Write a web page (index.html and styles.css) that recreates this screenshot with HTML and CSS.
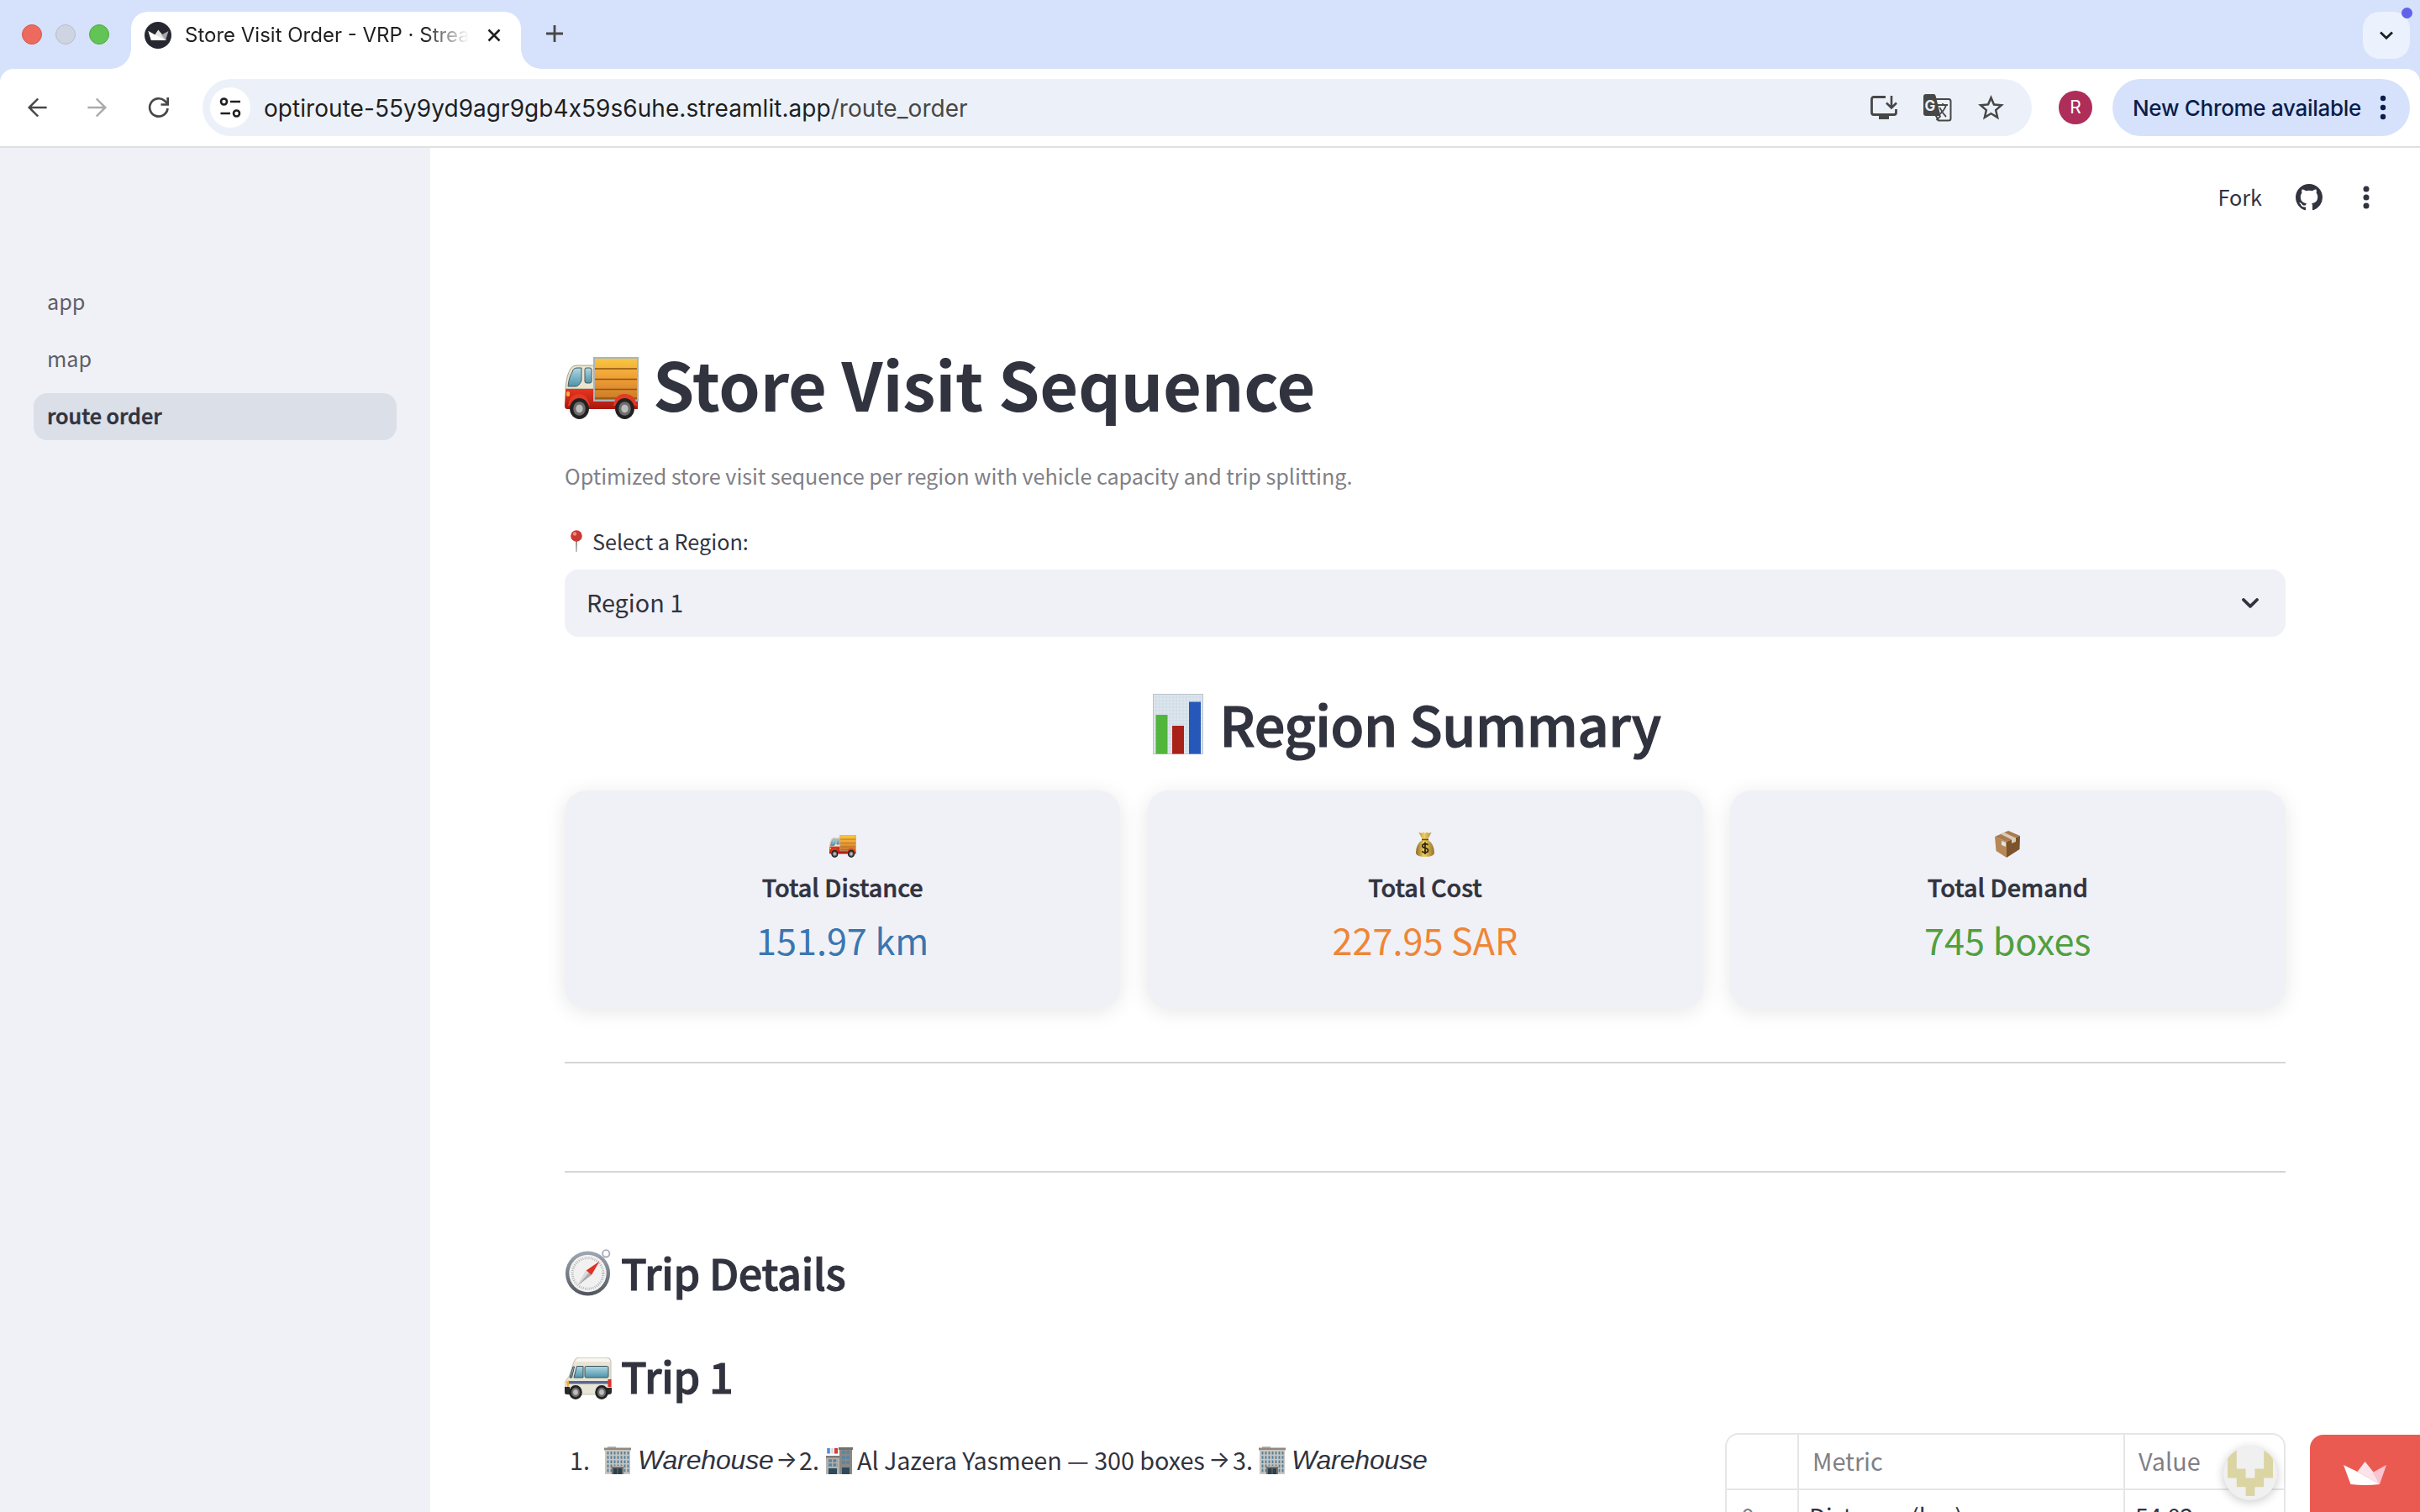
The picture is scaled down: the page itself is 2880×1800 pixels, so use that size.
FILE: index.html
```
<!DOCTYPE html>
<html lang="en">
<head>
<meta charset="utf-8">
<title>Store Visit Order - VRP · Streamlit</title>
<link rel="stylesheet" href="styles.css">
</head>
<body>
<svg class="defs" aria-hidden="true">
  <defs>
    <linearGradient id="cargo" x1="0" y1="0" x2="0" y2="1"><stop offset="0" stop-color="#f8c840"/><stop offset=".45" stop-color="#f0a038"/><stop offset="1" stop-color="#c87824"/></linearGradient>
    <linearGradient id="glass" x1="0" y1="0" x2="0" y2="1"><stop offset="0" stop-color="#b0d8e4"/><stop offset="1" stop-color="#4d93a9"/></linearGradient>
    <linearGradient id="red" x1="0" y1="0" x2="0" y2="1"><stop offset="0" stop-color="#e8351f"/><stop offset="1" stop-color="#a8170f"/></linearGradient>
    <linearGradient id="rim" x1="0" y1="0" x2="0" y2="1"><stop offset="0" stop-color="#9fa8b3"/><stop offset="1" stop-color="#50555b"/></linearGradient>
    <linearGradient id="gold" x1="0" y1="0" x2="1" y2="0"><stop offset="0" stop-color="#8d6b22"/><stop offset=".45" stop-color="#efd062"/><stop offset="1" stop-color="#96722a"/></linearGradient>
    <symbol id="wheel" viewBox="0 0 22 24"><ellipse cx="11" cy="12" rx="11" ry="12" fill="#222"/><ellipse cx="11" cy="12" rx="7" ry="8" fill="#6e6e6e"/><ellipse cx="11" cy="12" rx="4" ry="4.6" fill="#bdbdbd"/></symbol>
    <symbol id="truck" viewBox="0 0 88 74">
      <path d="M14 10H36V38H1Q2 22 7 14Q9 10 14 10Z" fill="#ebe4cf" stroke="#a8a394" stroke-width="1"/>
      <path d="M1 38H36V52H87V62H3Q0 62 0 58Z" fill="url(#red)"/>
      <path d="M9 18Q10 13 15 13H20V28Q17 35 13 35H4Q5 24 9 18Z" fill="url(#glass)" stroke="#4a5a60" stroke-width="1"/>
      <rect x="24" y="13" width="8" height="18" rx="2" fill="url(#glass)" stroke="#4a5a60" stroke-width="1"/>
      <rect x="35" y="1" width="52" height="51" fill="url(#cargo)" stroke="#aab5b8" stroke-width="2"/>
      <path d="M36 14H86M36 26.500H86M36 38.500H86M36 49H86" stroke="#8f5312" stroke-width="1.500"/>
      <path d="M4 58Q6 44 17 44Q27 44 30 58ZM58 58Q60 44 71 44Q84 44 86 58Z" fill="#e23a25"/>
      <rect x="2" y="41" width="4" height="6" rx="2" fill="#f6b445"/>
      <use href="#wheel" x="6" y="49" width="23" height="25"/><use href="#wheel" x="60" y="49" width="23" height="25"/>
    </symbol>
    <symbol id="office" viewBox="0 0 32 33">
      <rect x="4" y="0" width="10" height="3" fill="#bdb8b4"/><rect x="0" y="1.500" width="32" height="3" fill="#8f8883"/>
      <rect x="1" y="4" width="30" height="29" fill="#cbc5be"/>
      <path d="M4.500 6V31M8.500 6V31M12.500 6V23M16.500 6V23M20.500 6V23M24.500 6V31M28.500 6V31" stroke="#4f7f9e" stroke-width="1.900" stroke-dasharray="3.600 1.600"/>
      <rect x="9" y="24" width="14" height="9" fill="#77706b"/><rect x="11" y="26" width="10" height="7" fill="#26414f"/><path d="M16 26V33" stroke="#77706b"/>
    </symbol>
  </defs>
</svg>

<div class="browser">
  <div class="tabstrip">
    <div class="lights"><i class="light red"></i><i class="light grey"></i><i class="light green"></i></div>
    <div class="tab">
      <svg class="favicon" viewBox="0 0 32 32"><circle cx="16" cy="16" r="16" fill="#262730"/><path d="M4.500 11L12 16L26 22H8Z" fill="#fff"/><path d="M12 16L16.300 9.500L21 15L26 22H8Z" fill="#e4e4e6"/><path d="M28.500 11L20 15.500L25 22Z" fill="#a5a5aa"/><path d="M4.500 11L25 22H8Z" fill="#fff"/></svg>
      <span class="tab-title">Store Visit Order - VRP · Strea</span>
      <svg class="close" viewBox="0 0 16 16"><path d="M1.500 1.500L14.500 14.500M14.500 1.500L1.500 14.500" stroke="#1f1f1f" stroke-width="2.600"/></svg>
    </div>
    <svg class="plus" viewBox="0 0 20 20"><path d="M10 0V20M0 10H20" stroke="#474747" stroke-width="2.800"/></svg>
    <div class="tab-search"><svg viewBox="0 0 16 10"><path d="M1 1.500L8 8.300L15 1.500" fill="none" stroke="#1f1f1f" stroke-width="2.800"/></svg><i class="notice"></i></div>
  </div>
  <div class="toolbar">
    <svg class="nav back" viewBox="0 0 24 24"><path d="M20.200 11.100H7.600l5.900-5.900L12.200 4l-8 8 8 8 1.300-1.200-5.900-5.900H20.200Z" fill="#474747"/></svg>
    <svg class="nav forward" viewBox="0 0 24 24"><path d="M3.800 11.100H16.400l-5.900-5.900L11.800 4l8 8-8 8-1.300-1.200 5.900-5.900H3.800Z" fill="#ababab"/></svg>
    <svg class="reload" viewBox="0 0 26 26"><path d="M23.500 14A10.700 10.700 0 1 1 20 5L23 8" fill="none" stroke="#474747" stroke-width="2.700"/><path d="M23.700 1V9.500H15.500" fill="none" stroke="#474747" stroke-width="2.700"/></svg>
    <div class="omnibox">
      <div class="site"><svg viewBox="0 0 26 24"><g fill="none" stroke="#1f1f1f" stroke-width="2.600"><circle cx="5.500" cy="5" r="3.500"/><path d="M13 5H25M1.500 19H13"/><circle cx="20.500" cy="19" r="3.500"/></g></svg></div>
      <div class="url">optiroute-55y9yd9agr9gb4x59s6uhe.streamlit.app<span>/route_order</span></div>
      <svg class="install" viewBox="0 0 32 28"><path d="M18 1.500H4Q1.500 1.500 1.500 4V20Q1.500 22.500 4 22.500H28Q30.500 22.500 30.500 20V16" fill="none" stroke="#474747" stroke-width="2.800"/><path d="M10 23H22V28H10Z" fill="#474747"/><path d="M25 0V14M19 8.500L25 14.500L31 8.500" fill="none" stroke="#474747" stroke-width="2.600"/></svg>
      <svg class="translate" viewBox="0 0 34 34"><path d="M14 7H30Q32.500 7 32.500 9.500V30Q32.500 32.500 30 32.500H18L14.500 26" fill="none" stroke="#474747" stroke-width="2"/><path d="M3 1H12.500Q14 1 14.600 3L20.500 27H3Q0 27 0 24V4Q0 1 3 1Z" fill="#474747"/><path d="M17 14H29M23 12V14M27 14Q25 21 18 26M19.500 17Q22 23 27 28M15.500 32L20.500 27" fill="none" stroke="#474747" stroke-width="1.800"/><text class="translate-g" x="1.500" y="20.500">G</text></svg>
      <svg class="star" viewBox="0 0 24 24"><path d="M22 9.240l-7.190-.62L12 2 9.190 8.630 2 9.240l5.460 4.730L5.820 21 12 17.270 18.180 21l-1.630-7.030L22 9.240zM12 15.400l-3.760 2.270 1-4.280-3.320-2.880 4.380-.38L12 6.100l1.710 4.040 4.380.38-3.320 2.880 1 4.280L12 15.400z" fill="#474747"/></svg>
    </div>
    <div class="profile">R</div>
    <div class="update"><span>New Chrome available</span><svg viewBox="0 0 8 30"><g fill="#0a1d4d"><circle cx="4" cy="4" r="3.200"/><circle cx="4" cy="15" r="3.200"/><circle cx="4" cy="26" r="3.200"/></g></svg></div>
  </div>
</div>

<div class="app">
  <nav class="sidebar">
    <a class="page-link">app</a>
    <a class="page-link">map</a>
    <a class="page-link active">route order</a>
  </nav>
  <main class="main">
    <header class="app-header">
      <span class="fork">Fork</span>
      <svg class="github" viewBox="0 0 16 16"><path fill="#31333f" d="M8 0C3.580 0 0 3.580 0 8c0 3.540 2.290 6.530 5.470 7.590.4.070.55-.17.55-.38 0-.19-.01-.82-.01-1.490-2.010.37-2.530-.49-2.690-.94-.09-.23-.48-.94-.82-1.130-.28-.15-.68-.52-.01-.53.63-.01 1.080.58 1.230.82.72 1.210 1.870.87 2.330.66.070-.52.28-.87.51-1.070-1.780-.2-3.640-.89-3.640-3.950 0-.87.31-1.590.82-2.150-.08-.2-.36-1.020.08-2.120 0 0 .67-.21 2.200.82.64-.18 1.320-.27 2-.27.68 0 1.360.09 2 .27 1.530-1.040 2.200-.82 2.200-.82.44 1.100.16 1.920.08 2.120.51.56.82 1.270.82 2.150 0 3.070-1.870 3.750-3.650 3.950.29.25.54.73.54 1.480 0 1.070-.01 1.930-.01 2.200 0 .21.15.46.55.38A8.010 8.010 0 0 0 16 8c0-4.420-3.580-8-8-8z"/></svg>
      <svg class="kebab" viewBox="0 0 8 28"><g fill="#31333f"><circle cx="4" cy="4" r="3.500"/><circle cx="4" cy="14" r="3.500"/><circle cx="4" cy="24" r="3.500"/></g></svg>
    </header>
    <div class="content">
      <h1 class="title"><svg class="title-icon"><use href="#truck"/></svg><span>Store Visit Sequence</span></h1>
      <p class="caption">Optimized store visit sequence per region with vehicle capacity and trip splitting.</p>
      <div class="label"><svg class="pin" viewBox="0 0 14 26"><path d="M6 12H8L7.500 26H6.500Z" fill="#8f8a86"/><circle cx="7" cy="7" r="6.800" fill="#c93a34"/><circle cx="5" cy="4.500" r="2.200" fill="#ef8a80"/></svg><span>Select a Region:</span></div>
      <div class="select"><span>Region 1</span><svg viewBox="0 0 20 12"><path d="M2 2L10 9.800L18 2" fill="none" stroke="#31333f" stroke-width="3.800" stroke-linecap="round" stroke-linejoin="round"/></svg></div>

      <h2 class="summary-title">
        <svg viewBox="0 0 60 72"><rect width="60" height="72" fill="#dfe6ec"/><path d="M4 0V72M8 0V72M12 0V72M16 0V72M20 0V72M24 0V72M28 0V72M32 0V72M36 0V72M40 0V72M44 0V72M48 0V72M52 0V72M56 0V72M0 4H60M0 8H60M0 12H60M0 16H60M0 20H60M0 24H60M0 28H60M0 32H60M0 36H60M0 40H60M0 44H60M0 48H60M0 52H60M0 56H60M0 60H60M0 64H60M0 68H60" stroke="#c3d9e8" stroke-width=".6"/><rect x=".5" y=".5" width="59" height="71" fill="none" stroke="#bcc3ca"/><rect x="3.500" y="25" width="14" height="46.500" fill="#52b53c"/><rect x="23" y="38" width="14" height="33.500" fill="#a9221a"/><rect x="43" y="9.500" width="14" height="62" fill="#2558b8"/></svg>
        <span>Region Summary</span>
      </h2>
      <div class="cards">
        <div class="card"><svg class="card-icon truck"><use href="#truck"/></svg><div class="card-label">Total Distance</div><div class="card-value blue">151.97 km</div></div>
        <div class="card"><svg class="card-icon bag" viewBox="0 0 22 30"><path d="M3.500 1L7 2L9 .5L11 2L13.500 .5L15 2L18.500 1L14 9.500Q22 15 22 25Q22 30 11 30Q0 30 0 25Q0 15 8 9.500Z" fill="url(#gold)"/><path d="M7 9.500H15" stroke="#6b4c14" stroke-width="1.500"/><path d="M14.600 15.800Q11 13.600 8.200 15.800Q6.600 18.600 11 19.600Q15.800 20.800 14.200 23.800Q11 26.200 7.200 23.600M11 12.500V27" fill="none" stroke="#33280f" stroke-width="1.800"/></svg><div class="card-label">Total Cost</div><div class="card-value orange">227.95 SAR</div></div>
        <div class="card"><svg class="card-icon box" viewBox="0 0 30 32"><path d="M0 7L14 13L14 32L1.500 24Z" fill="#b88758"/><path d="M14 13L30 6L29.500 22L14 32Z" fill="#7b532c"/><path d="M0 7L16 0L30 6L14 13Z" fill="#a87b50"/><path d="M7 4L11 2L25 8.500V13L20 15V10.500Z" fill="#dccbb2"/><path d="M8 12L13 14V19L8 17Z" fill="#e2e3e4"/></svg><div class="card-label">Total Demand</div><div class="card-value green">745 boxes</div></div>
      </div>
      <hr class="rule">
      <hr class="rule second">

      <h3 class="section"><svg viewBox="0 0 56 58"><circle cx="50" cy="5.500" r="4.300" fill="none" stroke="#a9afb6" stroke-width="2"/><circle cx="27.500" cy="30" r="27.500" fill="url(#rim)"/><circle cx="27.500" cy="30" r="23" fill="#f1f1f1"/><circle cx="27.500" cy="30" r="19" fill="none" stroke="#a9a9a9" stroke-width="3" stroke-dasharray=".8 1.700"/><path d="M42 15L32 32L25.500 26.500Z" fill="#dd3229"/><path d="M15 45L32 32L25.500 26.500Z" fill="#a9a9a9"/><path d="M15 45L28.700 29.200L25.500 26.500Z" fill="#dcdcdc"/></svg><span>Trip Details</span></h3>
      <h3 class="section trip"><svg viewBox="0 0 56 50"><path d="M17 0H50Q54 0 55 4V40Q55 44 52 44H4Q0 44 0 40V30Q2 26 5 23L11 5Q13 0 17 0Z" fill="#e9e5d6" stroke="#b7b3a5" stroke-width=".8"/><path d="M15 1H50Q53 1 54 5H12.500Z" fill="#f8f6ee"/><path d="M6 24L10 11H11.500L8.500 24ZM11 24L14.500 10.500H22V24Z" fill="url(#glass)" stroke="#3f5258"/><rect x="24" y="10.500" width="28" height="13.500" rx="1.500" fill="url(#glass)" stroke="#3f5258"/><path d="M5 28H52V31.500H5Z" fill="#5a6796"/><rect x="51.500" y="26" width="4" height="9" fill="#df3028"/><path d="M2 29L5 27V34L3 35Z" fill="#eeb33b"/><path d="M0 35H6V44H2Q0 44 0 41ZM50 36H56V41Q56 44 53 44H50Z" fill="#2a2a2a"/><use href="#wheel" x="5" y="33" width="16" height="17"/><use href="#wheel" x="36" y="33" width="16" height="17"/></svg><span>Trip 1</span></h3>

      <div class="trip-row">
        <div class="stops">
          <span class="num">1.</span><svg class="place first"><use href="#office"/></svg><em class="wh">Warehouse</em>
          <span class="arrow">→</span><span class="num two">2.</span>
          <svg class="place store" viewBox="0 0 32 33"><rect x="0" y="13" width="17" height="20" fill="#b5b1ad"/><rect x="1" y="2" width="15" height="6.500" fill="#f2f2f2"/><path d="M3 2V8.500" stroke="#4a90d8" stroke-width="3.500"/><path d="M12 2V8.500" stroke="#dc3a34" stroke-width="4"/><path d="M7.500 2V8.500" stroke="#cfd8e2" stroke-width="2"/><rect x="0" y="11" width="16" height="2.500" fill="#7f7a76"/><rect x="16" y="2" width="15" height="31" fill="#8c8783"/><rect x="15" y="1" width="17" height="3" fill="#75706c"/><path d="M19 7H28M19 13H28M19 19H28M3 17H14M3 22H14" stroke="#5587a5" stroke-width="3.400" stroke-dasharray="4 1.300"/><rect x="3" y="26" width="10" height="7" fill="#2c4a5b"/><rect x="19" y="25" width="9" height="8" fill="#2c4a5b"/></svg>
          <span class="store-name">Al Jazera Yasmeen — 300 boxes</span>
          <span class="arrow later">→</span><span class="num three">3.</span><svg class="place last"><use href="#office"/></svg><em class="wh end">Warehouse</em>
        </div>
        <div class="table">
          <div class="tr head"><div class="td"></div><div class="td">Metric</div><div class="td">Value</div></div>
          <div class="tr"><div class="td idx">0</div><div class="td">Distance (km)</div><div class="td num-cell">54.02</div></div>
        </div>
      </div>
    </div>
  </main>
</div>

<div class="creator"><svg viewBox="0 0 54 54"><path d="M0 0H10.800V21.600H21.600V32.400H32.400V21.600H43.200V0H54V32.400H43.200V43.200H32.400V54H21.600V43.200H10.800V32.400H0Z" fill="#dbd5a3"/></svg></div>
<div class="badge"><svg viewBox="0 0 51 28"><path d="M25.600 0L16.500 12L43 27L36 13Z" fill="#fce3ea"/><path d="M51 4L34.500 13L43 27Z" fill="#f9c3cf"/><path d="M0 4L16.500 12L43 27Q26 29 8.500 27Z" fill="#fff"/></svg></div>
</body>
</html>
```
FILE: styles.css
```
* { box-sizing: border-box; }
body {
  margin: 0;
  width: 2880px;
  height: 1800px;
  overflow: hidden;
  position: relative;
  display: flex;
  flex-direction: column;
  background: #fff;
  color: #31333f;
  font-family: "Noto Sans CJK SC", "Noto Sans", sans-serif;
  font-size: 28.8px;
}
svg { display: block; flex: none; }
h1, h2, h3, p { margin: 0; font-weight: inherit; }
.defs { position: absolute; width: 0; height: 0; }

/* Browser window */
.browser { background: #d6e2fb; font-family: Inter, sans-serif; flex: none; }
.tabstrip { height: 82px; display: flex; align-items: flex-start; padding: 0 12px 0 26px; }
.lights { display: flex; gap: 16px; margin-top: 29px; }
.light { width: 24px; height: 24px; border-radius: 50%; border: 1px solid; }
.light.red { background: #ec6a5e; border-color: #d25a4f; }
.light.grey { background: #ced4e1; border-color: #b8bdcb; }
.light.green { background: #61c454; border-color: #51a845; }
.tab {
  position: relative;
  margin: 14px 0 0 26px;
  width: 464px;
  height: 68px;
  padding: 0 24px 12px 16px;
  border-radius: 20px 20px 0 0;
  background: #fff;
  display: flex;
  align-items: center;
}
.tab::before, .tab::after { content: ""; position: absolute; bottom: 0; width: 24px; height: 24px; }
.tab::before { left: -24px; background: radial-gradient(circle at 0 0, transparent 23.5px, #fff 24px); }
.tab::after { right: -24px; background: radial-gradient(circle at 100% 0, transparent 23.5px, #fff 24px); }
.favicon { width: 32px; height: 32px; }
.tab-title {
  margin-left: 16px;
  width: 340px;
  font-size: 24px;
  line-height: 32px;
  color: #1f1f1f;
  white-space: nowrap;
  -webkit-mask-image: linear-gradient(90deg, #000 285px, transparent 338px);
  mask-image: linear-gradient(90deg, #000 285px, transparent 338px);
}
.close { width: 16px; height: 16px; margin-left: 20px; }
.plus { width: 20px; height: 20px; margin: 30px 0 0 30px; }
.tab-search {
  position: relative;
  margin: 14px 0 0 auto;
  width: 56px;
  height: 56px;
  border-radius: 20px;
  background: #ebf2fd;
  display: flex;
  align-items: center;
  justify-content: center;
}
.tab-search svg { width: 16px; height: 10px; }
.notice { position: absolute; right: -3px; top: -5px; width: 13px; height: 13px; border-radius: 50%; background: #6161ea; }

.toolbar {
  height: 94px;
  padding: 0 12px 0 27px;
  background: #fff;
  border-radius: 16px 16px 0 0;
  border-bottom: 2px solid #e0e0e0;
  display: flex;
  align-items: center;
}
.nav { width: 34px; height: 34px; }
.forward { margin-left: 38px; }
.reload { width: 26px; height: 26px; margin-left: 43px; }
.omnibox {
  flex: 1;
  height: 68px;
  margin-left: 39px;
  padding: 0 30px 0 9px;
  border-radius: 34px;
  background: #ecf1f9;
  display: flex;
  align-items: center;
}
.site { width: 48px; height: 48px; border-radius: 50%; background: #fff; display: flex; align-items: center; justify-content: center; }
.site svg { width: 26px; height: 24px; }
.url { flex: 1; margin-left: 16px; padding-top: 1px; font-size: 28px; line-height: 40px; color: #1f1f1f; letter-spacing: .05px; }
.url span { color: #474747; }
.install { width: 32px; height: 28px; }
.translate { width: 34px; height: 34px; margin-left: 31px; }
.translate-g { font: 700 17px Inter, sans-serif; fill: #ecf1f9; }
.star { width: 37px; height: 37px; margin-left: 28px; }
.profile {
  width: 40px;
  height: 40px;
  margin-left: 32px;
  border-radius: 50%;
  background: #af2d59;
  color: #fff;
  font-size: 21px;
  line-height: 40px;
  text-align: center;
}
.update {
  width: 354px;
  height: 68px;
  margin-left: 24px;
  padding: 0 28px 0 24px;
  border-radius: 34px;
  background: #d6e2fb;
  color: #0a1d4d;
  display: flex;
  align-items: center;
  justify-content: space-between;
  font-size: 26px;
  font-weight: 500;
  letter-spacing: -.3px;
  white-space: nowrap;
}
.update span { padding-top: 1px; }
.update svg { width: 8px; height: 30px; }

/* App shell */
.app { flex: 1; min-height: 0; display: flex; }
.sidebar { width: 512px; padding: 156px 40px 0; background: #f0f1f6; display: flex; flex-direction: column; gap: 12px; }
.page-link { height: 56px; padding: 0 16px; border-radius: 16px; font-size: 25.2px; line-height: 52px; color: #5c5e69; }
.page-link.active { background: #dbdfe8; color: #31333f; font-weight: 500; -webkit-text-stroke: .6px #31333f; }
.main { flex: 1; min-width: 0; }
.app-header { height: 118px; padding-right: 60px; display: flex; align-items: center; justify-content: flex-end; }
.fork { padding-bottom: 2px; font-size: 25.2px; line-height: 40px; }
.github { width: 32px; height: 32px; margin-left: 40px; }
.kebab { width: 8px; height: 28px; margin-left: 48px; }

.content { padding: 0 160px; }
.title { height: 106px; margin-top: 109px; display: flex; align-items: center; gap: 17px; font-size: 79.2px; font-weight: 700; line-height: 106px; letter-spacing: -.22px; }
.title-icon { width: 88px; height: 74px; margin-top: 12px; }
.caption { margin-top: 35px; font-size: 25.2px; line-height: 44px; letter-spacing: -.05px; color: #808087; }
.label { margin-top: 34px; padding-left: 7px; display: flex; align-items: center; gap: 12px; font-size: 25.2px; line-height: 44px; }
.pin { width: 14px; height: 26px; }
.select {
  height: 80px;
  margin-top: 12px;
  padding: 0 32px 0 26px;
  border-radius: 16px;
  background: #f0f1f6;
  display: flex;
  align-items: center;
  justify-content: space-between;
}
.select span { padding-bottom: 2px; line-height: 40px; }
.select svg { width: 20px; height: 12px; }

.summary-title {
  height: 90px;
  margin-top: 58px;
  padding-right: 43px;
  display: flex;
  align-items: center;
  justify-content: center;
  gap: 19px;
  font-size: 64.8px;
  line-height: 90px;
  font-weight: 500;
  letter-spacing: -.4px;
  -webkit-text-stroke: 1.2px #31333f;
}
.summary-title svg { width: 60px; height: 72px; margin-top: 2px; }
.cards { margin-top: 35px; display: grid; grid-template-columns: repeat(3, 1fr); gap: 32px; }
.card {
  height: 259px;
  padding-top: 48px;
  border-radius: 26px;
  background: #f0f1f6;
  box-shadow: 0 4px 24px rgba(0, 0, 0, .1);
  text-align: center;
  display: flex;
  flex-direction: column;
  align-items: center;
}
.card-icon { height: 32px; }
.card-icon.truck { width: 32px; padding-top: 5px; }
.card-icon.bag { width: 22px; }
.card-icon.box { width: 30px; }
.card-label { margin-top: 12px; line-height: 46px; font-weight: 500; -webkit-text-stroke: .6px #31333f; }
.card-value { margin-top: 4px; font-size: 43.2px; line-height: 70px; }
.blue { color: #3a76b0; }
.orange { color: #ee8636; }
.green { color: #519f3e; }
.rule { margin: 64px 0 0; height: 2px; border: 0; background: #d6d6d9; }
.rule.second { margin-top: 128px; }

.section {
  margin-top: 85px;
  height: 68px;
  display: flex;
  align-items: center;
  gap: 11px;
  font-size: 50.4px;
  line-height: 68px;
  font-weight: 500;
  letter-spacing: -.3px;
  -webkit-text-stroke: 1px #31333f;
}
.section svg { width: 56px; height: 56px; }
.section.trip { margin-top: 55px; }
.section.trip svg { height: 50px; margin-top: 6px; }
.section svg, .summary-title svg { -webkit-text-stroke: 0; }

.trip-row { margin-top: 34px; display: flex; justify-content: space-between; align-items: flex-start; }
.stops { padding: 6px 0 0 6px; display: flex; align-items: center; line-height: 52px; white-space: nowrap; }
.num { width: 24px; }
.num.two { margin-left: 4px; }
.num.three { margin-left: 5px; }
.place { width: 32px; height: 33px; }
.place.first { margin-left: 17px; }
.place.store { margin-left: 8px; }
.place.last { margin-left: 7px; }
.wh { width: 162px; margin-left: 8px; font-family: "Liberation Sans", Arial, sans-serif; font-size: 32px; letter-spacing: -.15px; }
.wh.end { margin-left: 7px; }
.arrow { width: 22px; margin-left: 4px; display: flex; justify-content: center; font-family: Inter, sans-serif; font-size: 27px; }
.arrow.later { margin-left: 6px; }
.store-name { width: 414px; margin-left: 5px; letter-spacing: -.08px; }

.table { width: 667px; border: 2px solid #e6e6e9; border-radius: 16px; overflow: hidden; }
.tr { display: grid; grid-template-columns: 86px 388px 1fr; height: 66px; }
.td { padding: 0 0 3px 12px; line-height: 61px; border-right: 2px solid #e6e6e9; border-bottom: 2px solid #e6e6e9; }
.td:last-child { border-right: 0; }
.head .td { padding-left: 16px; color: #808087; }
.td.idx { padding-left: 17px; color: #808087; }
.num-cell { letter-spacing: -.6px; }

/* Hosted-app overlays */
.creator {
  position: absolute;
  left: 2646px;
  top: 1722px;
  width: 64px;
  height: 64px;
  border-radius: 50%;
  background: #f0f0f0;
  box-shadow: 0 2px 12px rgba(0, 0, 0, .22);
  overflow: hidden;
  display: flex;
  align-items: center;
  justify-content: center;
}
.creator svg { width: 54px; height: 54px; }
.badge { position: absolute; right: 0; bottom: 0; width: 131px; height: 92px; padding: 32px 0 0 40px; border-radius: 16px 0 0 0; background: #eb5a50; }
.badge svg { width: 51px; height: 28px; }
```
